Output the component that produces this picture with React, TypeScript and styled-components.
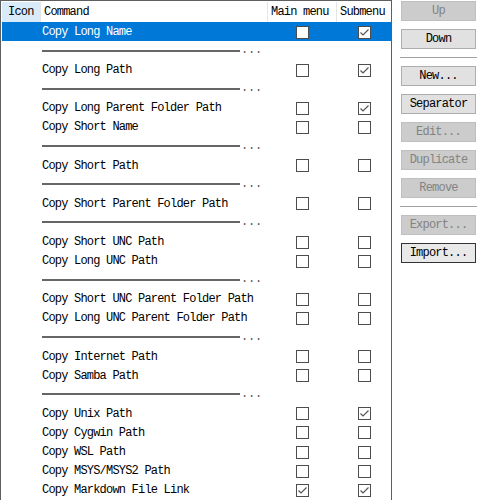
import React from 'react';
import styled, { createGlobalStyle } from 'styled-components';

type Item =
    | { kind: 'cmd'; name: string; main?: boolean; sub?: boolean }
    | { kind: 'sep' };

const items: Item[] = [
    { kind: 'cmd', name: 'Copy Long Name', sub: true },
    { kind: 'sep' },
    { kind: 'cmd', name: 'Copy Long Path', sub: true },
    { kind: 'sep' },
    { kind: 'cmd', name: 'Copy Long Parent Folder Path', sub: true },
    { kind: 'cmd', name: 'Copy Short Name' },
    { kind: 'sep' },
    { kind: 'cmd', name: 'Copy Short Path' },
    { kind: 'sep' },
    { kind: 'cmd', name: 'Copy Short Parent Folder Path' },
    { kind: 'sep' },
    { kind: 'cmd', name: 'Copy Short UNC Path' },
    { kind: 'cmd', name: 'Copy Long UNC Path' },
    { kind: 'sep' },
    { kind: 'cmd', name: 'Copy Short UNC Parent Folder Path' },
    { kind: 'cmd', name: 'Copy Long UNC Parent Folder Path' },
    { kind: 'sep' },
    { kind: 'cmd', name: 'Copy Internet Path' },
    { kind: 'cmd', name: 'Copy Samba Path' },
    { kind: 'sep' },
    { kind: 'cmd', name: 'Copy Unix Path', sub: true },
    { kind: 'cmd', name: 'Copy Cygwin Path' },
    { kind: 'cmd', name: 'Copy WSL Path' },
    { kind: 'cmd', name: 'Copy MSYS/MSYS2 Path' },
    { kind: 'cmd', name: 'Copy Markdown File Link', main: true, sub: true },
];

const buttons: Array<{ label: string; disabled?: boolean; focused?: boolean } | 'divider'> = [
    { label: 'Up', disabled: true },
    { label: 'Down' },
    'divider',
    { label: 'New...' },
    { label: 'Separator' },
    { label: 'Edit...', disabled: true },
    { label: 'Duplicate', disabled: true },
    { label: 'Remove', disabled: true },
    'divider',
    { label: 'Export...', disabled: true },
    { label: 'Import...', focused: true },
];

const Check: React.FC<{ checked?: boolean }> = ({ checked }) => (
    <CheckBox>
        {checked && (
            <svg width="11" height="11" viewBox="0 0 11 11">
                <polyline points="1.5,5.5 4,8 9.5,2.5" fill="none" stroke="#555" strokeWidth="1.2" />
            </svg>
        )}
    </CheckBox>
);

export default function App() {
    return (
        <>
            <GlobalStyle />
            <Dialog>
                <ListBox>
                    <HeaderRow>
                        <HeaderCell $hover>Icon</HeaderCell>
                        <HeaderCell>Command</HeaderCell>
                        <HeaderCell>Main menu</HeaderCell>
                        <HeaderCell $last>Submenu</HeaderCell>
                    </HeaderRow>
                    {items.map((item, i) =>
                        item.kind === 'sep' ? (
                            <Row key={i}>
                                <span />
                                <SepCell>
                                    <SepLine />
                                    <Dots>...</Dots>
                                </SepCell>
                            </Row>
                        ) : (
                            <Row key={i} $selected={i === 0}>
                                <span />
                                <NameCell>{item.name}</NameCell>
                                <CheckCell>
                                    <Check checked={item.main} />
                                </CheckCell>
                                <CheckCell>
                                    <Check checked={item.sub} />
                                </CheckCell>
                            </Row>
                        )
                    )}
                </ListBox>
                <Side>
                    {buttons.map((b, i) =>
                        b === 'divider' ? (
                            <Divider key={i} />
                        ) : (
                            <Button key={i} $disabled={b.disabled} $focused={b.focused}>
                                {b.label}
                            </Button>
                        )
                    )}
                </Side>
            </Dialog>
        </>
    );
}

const GlobalStyle = createGlobalStyle`
    html, body {
        margin: 0;
        background: #fff;
    }
    body {
        font-family: "Liberation Mono", "DejaVu Sans Mono", monospace;
        font-size: 12px;
        letter-spacing: -0.8px;
        color: #000;
    }
`;

const Dialog = styled.div`
    display: flex;
    width: 478px;
    height: 500px;
    overflow: hidden;
`;

const ListBox = styled.div`
    box-sizing: border-box;
    width: 392px;
    height: 520px;
    flex: none;
    border: 1px solid #5f5f5f;
    padding: 1px 0 0 1px;
    background: #fff;
`;

const columns = '39px 227px 69px 1fr';

const HeaderRow = styled.div`
    display: grid;
    grid-template-columns: ${columns};
    height: 20px;
`;

const HeaderCell = styled.div<{ $hover?: boolean; $last?: boolean }>`
    display: flex;
    align-items: center;
    padding-left: ${(p) => (p.$hover ? '6px' : '3px')};
    background: ${(p) => (p.$hover ? '#d9ebf9' : '#fff')};
    border-right: ${(p) => (p.$last ? 'none' : '1px solid #e5e5e5')};
    white-space: nowrap;
    overflow: hidden;
`;

const Row = styled.div<{ $selected?: boolean }>`
    display: grid;
    grid-template-columns: ${columns};
    height: 19.1px;
    line-height: 19px;
    background: ${(p) => (p.$selected ? '#0078d7' : 'transparent')};
    color: ${(p) => (p.$selected ? '#fff' : '#000')};
`;

const NameCell = styled.div`
    padding: 1px 0 0 1px;
    white-space: nowrap;
`;

const SepCell = styled.div`
    display: flex;
    align-items: center;
    padding-left: 1px;
    grid-column: 2 / span 2;
`;

const SepLine = styled.div`
    width: 198px;
    height: 2px;
    background: #666;
`;

const Dots = styled.span`
    margin-left: 1px;
    color: #555;
    letter-spacing: -0.2px;
`;

const CheckCell = styled.div`
    display: flex;
    align-items: center;
    justify-content: center;
`;

const CheckBox = styled.div`
    box-sizing: border-box;
    width: 13px;
    height: 13px;
    border: 1px solid #4d4d4d;
    background: #fff;
    display: flex;
    align-items: center;
    justify-content: center;
`;

const Side = styled.div`
    display: flex;
    flex-direction: column;
    padding: 1px 0 0 9px;
    width: 75px;
`;

const Button = styled.div<{ $disabled?: boolean; $focused?: boolean }>`
    box-sizing: border-box;
    height: 20px;
    margin-bottom: 8px;
    display: flex;
    align-items: center;
    justify-content: center;
    background: ${(p) => (p.$disabled ? '#cccccc' : p.$focused ? '#e9e9e9' : '#e1e1e1')};
    border: 1px solid ${(p) => (p.$disabled ? '#bfbfbf' : p.$focused ? '#333' : '#adadad')};
    color: ${(p) => (p.$disabled ? '#838383' : '#000')};
`;

const Divider = styled.div`
    height: 1px;
    margin: 0 -1px 8px -1px;
    background: #a0a0a0;
`;
